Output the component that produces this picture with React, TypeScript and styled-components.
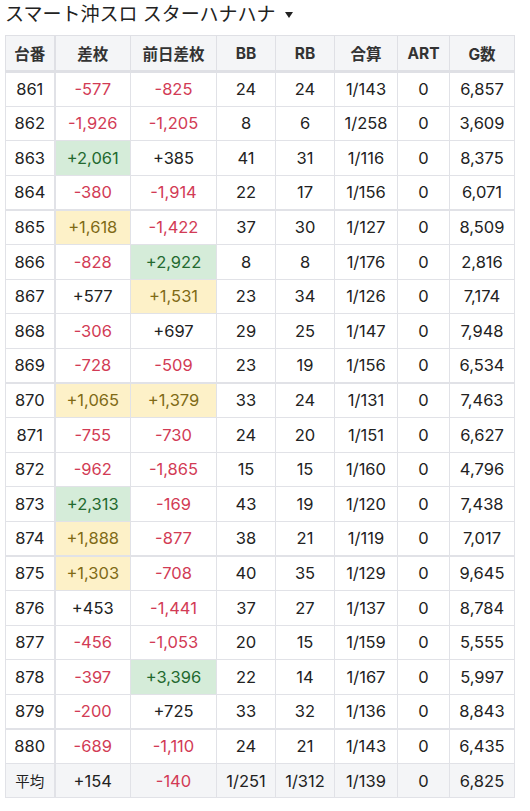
import styled, { createGlobalStyle } from "styled-components";

const GlobalStyle = createGlobalStyle`
  body {
    margin: 0;
    background: #fff;
    font-family: Inter, "Noto Sans CJK JP", sans-serif;
    color: #222;
  }
`;

type Row = [string, number, number, string, string, string, string, string];

const rows: Row[] = [
  ["861", -577, -825, "24", "24", "1/143", "0", "6,857"],
  ["862", -1926, -1205, "8", "6", "1/258", "0", "3,609"],
  ["863", 2061, 385, "41", "31", "1/116", "0", "8,375"],
  ["864", -380, -1914, "22", "17", "1/156", "0", "6,071"],
  ["865", 1618, -1422, "37", "30", "1/127", "0", "8,509"],
  ["866", -828, 2922, "8", "8", "1/176", "0", "2,816"],
  ["867", 577, 1531, "23", "34", "1/126", "0", "7,174"],
  ["868", -306, 697, "29", "25", "1/147", "0", "7,948"],
  ["869", -728, -509, "23", "19", "1/156", "0", "6,534"],
  ["870", 1065, 1379, "33", "24", "1/131", "0", "7,463"],
  ["871", -755, -730, "24", "20", "1/151", "0", "6,627"],
  ["872", -962, -1865, "15", "15", "1/160", "0", "4,796"],
  ["873", 2313, -169, "43", "19", "1/120", "0", "7,438"],
  ["874", 1888, -877, "38", "21", "1/119", "0", "7,017"],
  ["875", 1303, -708, "40", "35", "1/129", "0", "9,645"],
  ["876", 453, -1441, "37", "27", "1/137", "0", "8,784"],
  ["877", -456, -1053, "20", "15", "1/159", "0", "5,555"],
  ["878", -397, 3396, "22", "14", "1/167", "0", "5,997"],
  ["879", -200, 725, "33", "32", "1/136", "0", "8,843"],
  ["880", -689, -1110, "24", "21", "1/143", "0", "6,435"],
];

const headers = ["台番", "差枚", "前日差枚", "BB", "RB", "合算", "ART", "G数"];
const widths = [49, 76, 86, 59, 59, 63, 52, 65];

type Tone = "plain" | "minus" | "good" | "great";

const fmt = (n: number) => (n > 0 ? "+" : n < 0 ? "-" : "") + Math.abs(n).toLocaleString("en-US");

const tone = (n: number): Tone => {
  if (n >= 2000) return "great";
  if (n >= 1000) return "good";
  if (n < 0) return "minus";
  return "plain";
};

const Page = styled.div`
  padding: 0 5px;
`;

const Title = styled.h1`
  margin: 0;
  height: 35px;
  display: flex;
  align-items: flex-start;
  gap: 10px;
  padding-top: 2px;
  box-sizing: border-box;
  font-size: 19px;
  font-weight: 400;
  line-height: 25px;
  color: #222;
`;

const Caret = styled.span`
  width: 0;
  height: 0;
  margin-top: 10px;
  border-left: 4.5px solid transparent;
  border-right: 4.5px solid transparent;
  border-top: 6px solid #222;
`;

const Table = styled.table`
  border-collapse: collapse;
  table-layout: fixed;
  width: 509px;
  font-size: 16.5px;
  border: 1px solid #dfe0e5;
`;

const Th = styled.th<{ $first?: boolean }>`
  height: 34px;
  background: #f4f5f7;
  font-weight: 700;
  font-size: 15.5px;
  color: #333;
  text-align: center;
  border: 1px solid #dfe0e5;
  border-bottom: 3px solid #dfe0e5;
  border-right-width: ${(p) => (p.$first ? "2px" : "1px")};
  padding: 0;
`;

const Tr = styled.tr<{ $group?: boolean; $avg?: boolean }>`
  height: 34.6px;
  background: ${(p) => (p.$avg ? "#f4f5f7" : "#fff")};
  & > td {
    border-top-width: ${(p) => (p.$group ? "2px" : "1px")};
  }
`;

const Td = styled.td<{ $tone?: Tone; $first?: boolean; $small?: boolean }>`
  text-align: center;
  padding: 0;
  border: 1px solid #e1e2e7;
  border-right-width: ${(p) => (p.$first ? "2px" : "1px")};
  font-size: ${(p) => (p.$small ? "14.5px" : "inherit")};
  color: ${(p) =>
    p.$tone === "minus" ? "#d23b55" : p.$tone === "great" ? "#23692f" : p.$tone === "good" ? "#7f6a16" : "#222"};
  background: ${(p) => (p.$tone === "great" ? "#d5ecd9" : p.$tone === "good" ? "#fdf1c8" : "transparent")};
`;

const Num = ({ n }: { n: number }) => <Td $tone={tone(n)}>{fmt(n)}</Td>;

export default function App() {
  return (
    <Page>
      <GlobalStyle />
      <Title>
        スマート沖スロ スターハナハナ
        <Caret />
      </Title>
      <Table>
        <colgroup>
          {widths.map((w, i) => (
            <col key={i} style={{ width: w }} />
          ))}
        </colgroup>
        <thead>
          <tr>
            {headers.map((h, i) => (
              <Th key={h} $first={i === 0}>
                {h}
              </Th>
            ))}
          </tr>
        </thead>
        <tbody>
          {rows.map((r, i) => (
            <Tr key={r[0]} $group={i > 0 && i % 5 === 4}>
              <Td $first>{r[0]}</Td>
              <Num n={r[1]} />
              <Num n={r[2]} />
              <Td>{r[3]}</Td>
              <Td>{r[4]}</Td>
              <Td>{r[5]}</Td>
              <Td>{r[6]}</Td>
              <Td>{r[7]}</Td>
            </Tr>
          ))}
          <Tr $avg>
            <Td $first $small>
              平均
            </Td>
            <Num n={154} />
            <Num n={-140} />
            <Td>1/251</Td>
            <Td>1/312</Td>
            <Td>1/139</Td>
            <Td>0</Td>
            <Td>6,825</Td>
          </Tr>
        </tbody>
      </Table>
    </Page>
  );
}
